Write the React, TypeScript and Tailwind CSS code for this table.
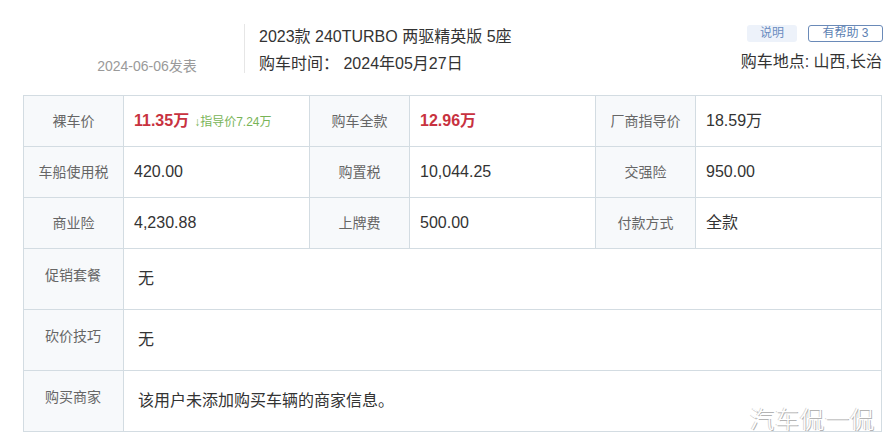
import React from 'react';

const font = "font-['Liberation_Sans','Noto_Sans_CJK_SC',sans-serif]";

const topRows: [string, React.ReactNode][][] = [
  [
    ['裸车价', (
      <span className="flex items-baseline gap-[5px]">
        <span className="font-bold text-[#c8323f]">11.35万</span>
        <span className="text-[12px] text-[#78b457]">↓指导价7.24万</span>
      </span>
    )],
    ['购车全款', <span className="font-bold text-[#c8323f]">12.96万</span>],
    ['厂商指导价', '18.59万'],
  ],
  [
    ['车船使用税', '420.00'],
    ['购置税', '10,044.25'],
    ['交强险', '950.00'],
  ],
  [
    ['商业险', '4,230.88'],
    ['上牌费', '500.00'],
    ['付款方式', '全款'],
  ],
];

const bottomRows = [
  ['促销套餐', '无'],
  ['砍价技巧', '无'],
  ['购买商家', '该用户未添加购买车辆的商家信息。'],
];

export default function App() {
  return (
    <div className={`relative w-[887px] h-[444px] bg-white overflow-hidden ${font}`}>
      {/* header */}
      <div className="flex h-[95px]">
        <div className="w-[244px] pl-[50px] pt-[56px] text-center text-[14px] text-[#9a9a9a]">
          2024-06-06发表
        </div>
        <div className="mt-[24px] h-[49px] w-px bg-[#e6e6e6]" />
        <div className="pl-[14px] pt-[23px] text-[16px] leading-[27px] text-[#333]">
          <div>2023款 240TURBO 两驱精英版 5座</div>
          <div>购车时间：&nbsp;2024年05月27日</div>
        </div>
        <div className="ml-auto mr-[4px] flex flex-col items-end pt-[25px]">
          <div className="flex gap-[11px] text-[12px] leading-[15px]">
            <span className="h-[17px] w-[50px] rounded-[3px] bg-[#edf2fa] text-center leading-[17px] text-[#6a8cc0]">说明</span>
            <span className="h-[17px] w-[75px] rounded-[3px] border border-[#6a8ab8] text-center text-[#5c7fb2]">有帮助 3</span>
          </div>
          <div className="mt-[8px] mr-px text-[16px] text-[#333]">购车地点: 山西,长治</div>
        </div>
      </div>

      {/* table */}
      <div className="ml-[23px] grid w-[859px] grid-cols-[100px_186px_100px_186px_100px_186px] border-l border-t border-[#d3dce2]">
        {topRows.map((row, i) =>
          row.map(([label, value], j) => (
            <React.Fragment key={`${i}-${j}`}>
              <div className="flex h-[51px] items-center justify-center border-b border-r border-[#d3dce2] bg-[#f7f9fb] text-[14px] text-[#666]">
                {label}
              </div>
              <div className="flex h-[51px] items-center border-b border-r border-[#d3dce2] pl-[10px] text-[16px] text-[#333]">
                {value}
              </div>
            </React.Fragment>
          ))
        )}
        {bottomRows.map(([label, value]) => (
          <React.Fragment key={label}>
            <div className="flex h-[61px] items-center border-b border-r border-[#d3dce2] bg-[#f7f9fb] pb-[7px] pl-[21px] text-[14px] text-[#666]">
              {label}
            </div>
            <div className="col-span-5 flex h-[61px] items-center border-b border-r border-[#d3dce2] pl-[14px] text-[16px] text-[#333]">
              {value}
            </div>
          </React.Fragment>
        ))}
      </div>

      {/* watermark */}
      <div className="absolute right-[12px] top-[402px] text-[24px] font-light tracking-[1px] text-white [text-shadow:1px_1px_0_#b4b4b4,-1px_0_0_#d6d6d6]">
        汽车侃一侃
      </div>
    </div>
  );
}
